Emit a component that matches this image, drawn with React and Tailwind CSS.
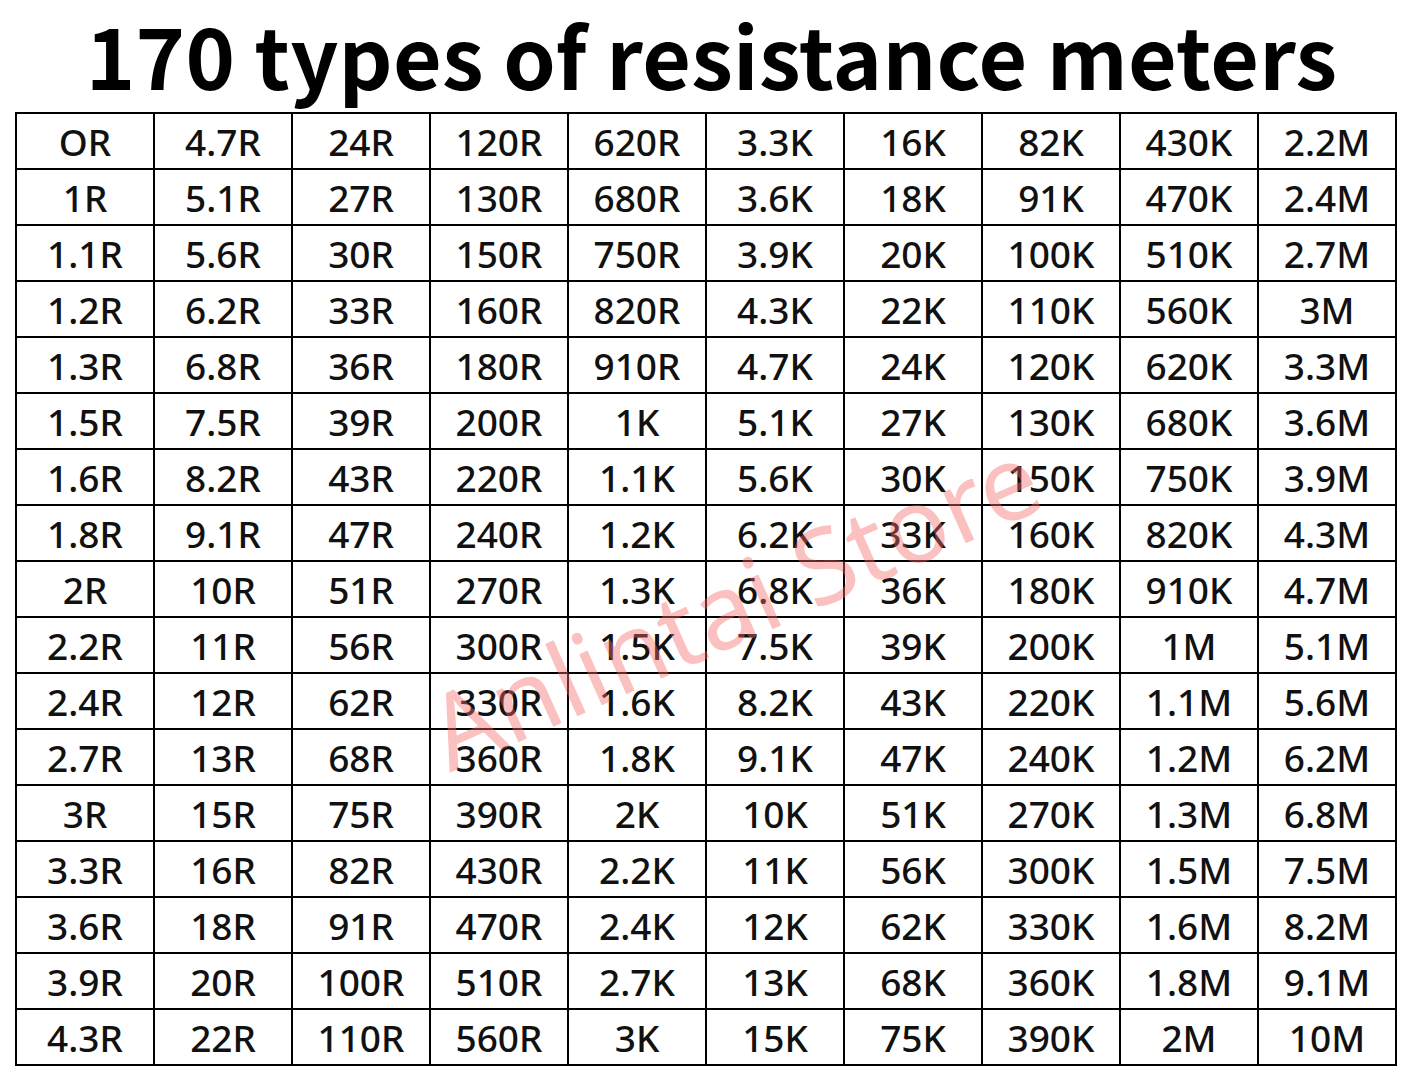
import React from 'react'

const columns = [
  ['OR', '1R', '1.1R', '1.2R', '1.3R', '1.5R', '1.6R', '1.8R', '2R', '2.2R', '2.4R', '2.7R', '3R', '3.3R', '3.6R', '3.9R', '4.3R'],
  ['4.7R', '5.1R', '5.6R', '6.2R', '6.8R', '7.5R', '8.2R', '9.1R', '10R', '11R', '12R', '13R', '15R', '16R', '18R', '20R', '22R'],
  ['24R', '27R', '30R', '33R', '36R', '39R', '43R', '47R', '51R', '56R', '62R', '68R', '75R', '82R', '91R', '100R', '110R'],
  ['120R', '130R', '150R', '160R', '180R', '200R', '220R', '240R', '270R', '300R', '330R', '360R', '390R', '430R', '470R', '510R', '560R'],
  ['620R', '680R', '750R', '820R', '910R', '1K', '1.1K', '1.2K', '1.3K', '1.5K', '1.6K', '1.8K', '2K', '2.2K', '2.4K', '2.7K', '3K'],
  ['3.3K', '3.6K', '3.9K', '4.3K', '4.7K', '5.1K', '5.6K', '6.2K', '6.8K', '7.5K', '8.2K', '9.1K', '10K', '11K', '12K', '13K', '15K'],
  ['16K', '18K', '20K', '22K', '24K', '27K', '30K', '33K', '36K', '39K', '43K', '47K', '51K', '56K', '62K', '68K', '75K'],
  ['82K', '91K', '100K', '110K', '120K', '130K', '150K', '160K', '180K', '200K', '220K', '240K', '270K', '300K', '330K', '360K', '390K'],
  ['430K', '470K', '510K', '560K', '620K', '680K', '750K', '820K', '910K', '1M', '1.1M', '1.2M', '1.3M', '1.5M', '1.6M', '1.8M', '2M'],
  ['2.2M', '2.4M', '2.7M', '3M', '3.3M', '3.6M', '3.9M', '4.3M', '4.7M', '5.1M', '5.6M', '6.2M', '6.8M', '7.5M', '8.2M', '9.1M', '10M'],
]

// table is written column by column, the grid fills row by row
const rows = columns[0].map((_, r) => columns.map((col) => col[r]))

export default function App() {
  return (
    <div className="relative w-[1412px] h-[1081px] bg-white overflow-hidden">
      <h1 className="h-[112px] flex items-center justify-center pb-[4px] pl-[11px] font-['Noto_Sans_CJK_SC','Noto_Sans',sans-serif] text-[84px] font-bold tracking-[0.25px] text-black leading-none">
        170 types of resistance meters
      </h1>

      <div className="ml-[15px] w-[1382px] grid grid-cols-10 gap-[2px] p-[2px] bg-black font-['Noto_Sans','Open_Sans',sans-serif]">
        {rows.flat().map((value, i) => (
          <div
            key={i}
            className="h-[54px] bg-white flex items-center justify-center text-[37px] font-medium text-[#111] leading-none"
          >
            {value}
          </div>
        ))}
      </div>

      {/* watermark */}
      <div className="absolute left-[733px] top-[603px] -translate-x-1/2 -translate-y-1/2 -rotate-[24deg] whitespace-nowrap font-['Noto_Sans',sans-serif] text-[104px] font-normal text-[rgba(245,105,105,0.42)] pointer-events-none">
        Anlintai Store
      </div>
    </div>
  )
}
